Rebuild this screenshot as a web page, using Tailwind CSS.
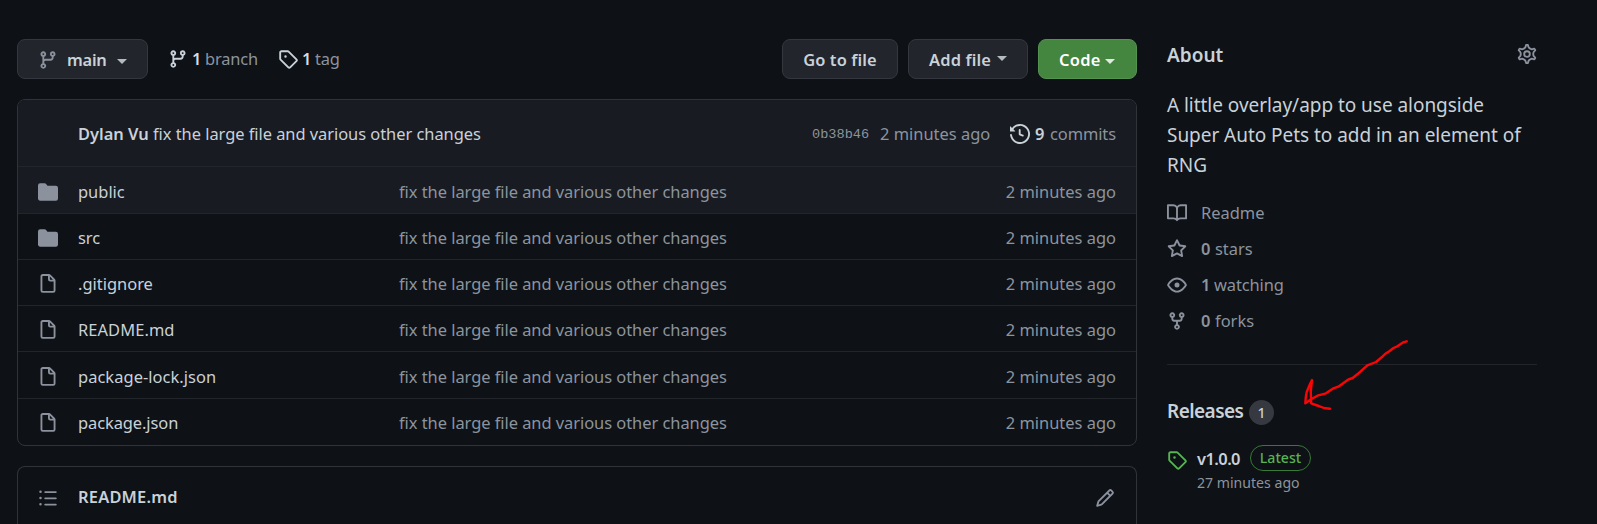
<!DOCTYPE html>
<html lang="en">
<head>
<meta charset="utf-8">
<title>Repository</title>
<script src="https://cdn.jsdelivr.net/npm/@tailwindcss/browser@4"></script>
</head>
<body class="relative h-[524px] w-[1597px] overflow-hidden bg-[#0e1116] font-['Noto_Sans',sans-serif] text-[16.45px] leading-[23px] whitespace-nowrap text-[#c9d1d9]">
<svg class="hidden">
  <symbol id="branch" viewBox="0 0 16 16"><path fill-rule="evenodd" d="M11.75 2.5a.75.75 0 100 1.5.75.75 0 000-1.5zm-2.25.75a2.25 2.25 0 113 2.122V6A2.5 2.5 0 0110 8.5H6a1 1 0 00-1 1v1.128a2.251 2.251 0 11-1.5 0V5.372a2.25 2.25 0 111.5 0v1.836A2.492 2.492 0 016 7h4a1 1 0 001-1v-.628A2.25 2.25 0 019.5 3.25zM4.25 12a.75.75 0 100 1.5.75.75 0 000-1.5zM3.5 3.25a.75.75 0 111.5 0 .75.75 0 01-1.5 0z"/></symbol>
  <symbol id="tag" viewBox="0 0 16 16"><path fill-rule="evenodd" d="M2.5 7.775V2.75a.25.25 0 01.25-.25h5.025a.25.25 0 01.177.073l6.25 6.25a.25.25 0 010 .354l-5.025 5.025a.25.25 0 01-.354 0l-6.25-6.25a.25.25 0 01-.073-.177zm-1.5 0V2.75C1 1.784 1.784 1 2.75 1h5.025c.464 0 .91.184 1.238.513l6.25 6.25a1.75 1.75 0 010 2.474l-5.026 5.026a1.75 1.75 0 01-2.474 0l-6.25-6.25A1.75 1.75 0 011 7.775zM6 5a1 1 0 100 2 1 1 0 000-2z"/></symbol>
  <symbol id="history" viewBox="0 0 16 16"><path fill-rule="evenodd" d="M1.643 3.143L.427 1.927A.25.25 0 000 2.104V5.75c0 .138.112.25.25.25h3.646a.25.25 0 00.177-.427L2.715 4.215a6.5 6.5 0 11-1.18 4.458.75.75 0 10-1.493.154 8.001 8.001 0 101.6-5.684zM7.75 4a.75.75 0 01.75.75v2.992l2.028.812a.75.75 0 01-.557 1.392l-2.5-1A.75.75 0 017 8.25v-3.5A.75.75 0 017.75 4z"/></symbol>
  <symbol id="folder" viewBox="0 0 16 16"><path d="M1.75 1A1.75 1.75 0 000 2.75v10.5C0 14.216.784 15 1.75 15h12.5A1.75 1.75 0 0016 13.25v-8.5A1.75 1.75 0 0014.25 3h-6.5a.25.25 0 01-.2-.1l-.9-1.2c-.33-.44-.85-.7-1.4-.7h-3.5z"/></symbol>
  <symbol id="file" viewBox="0 0 16 16"><path fill-rule="evenodd" d="M3.75 1.5a.25.25 0 00-.25.25v11.5c0 .138.112.25.25.25h8.5a.25.25 0 00.25-.25V6H9.75A1.75 1.75 0 018 4.25V1.5H3.75zm5.75.56v2.19c0 .138.112.25.25.25h2.19L9.5 2.06zM2 1.75C2 .784 2.784 0 3.75 0h5.086c.464 0 .909.184 1.237.513l3.414 3.414c.329.328.513.773.513 1.237v8.086A1.75 1.75 0 0112.25 15h-8.5A1.75 1.75 0 012 13.25V1.75z"/></symbol>
  <symbol id="book" viewBox="0 0 16 16"><path fill-rule="evenodd" d="M0 1.75A.75.75 0 01.75 1h4.253c1.227 0 2.317.59 3 1.501A3.744 3.744 0 0111.006 1h4.245a.75.75 0 01.75.75v10.5a.75.75 0 01-.75.75h-4.507a2.25 2.25 0 00-1.591.659l-.622.621a.75.75 0 01-1.06 0l-.622-.621A2.25 2.25 0 005.258 13H.75a.75.75 0 01-.75-.75V1.75zm8.755 3a2.25 2.25 0 012.25-2.25H14.5v9h-3.757c-.71 0-1.4.201-1.992.572l.004-7.322zm-1.504 7.324l.004-5.073-.002-2.253A2.25 2.25 0 005.003 2.5H1.5v9h3.757a3.75 3.75 0 011.994.574z"/></symbol>
  <symbol id="star" viewBox="0 0 16 16"><path fill-rule="evenodd" d="M8 .25a.75.75 0 01.673.418l1.882 3.815 4.21.612a.75.75 0 01.416 1.279l-3.046 2.97.719 4.192a.75.75 0 01-1.088.791L8 12.347l-3.766 1.98a.75.75 0 01-1.088-.79l.72-4.194L.818 6.374a.75.75 0 01.416-1.28l4.21-.611L7.327.668A.75.75 0 018 .25zm0 2.445L6.615 5.5a.75.75 0 01-.564.41l-3.097.45 2.24 2.184a.75.75 0 01.216.664l-.528 3.084 2.769-1.456a.75.75 0 01.698 0l2.77 1.456-.53-3.084a.75.75 0 01.216-.664l2.24-2.183-3.096-.45a.75.75 0 01-.564-.41L8 2.694v.001z"/></symbol>
  <symbol id="eye" viewBox="0 0 16 16"><path fill-rule="evenodd" d="M1.679 7.932c.412-.621 1.242-1.75 2.366-2.717C5.175 4.242 6.527 3.5 8 3.5c1.473 0 2.824.742 3.955 1.715 1.124.967 1.954 2.096 2.366 2.717a.119.119 0 010 .136c-.412.621-1.242 1.75-2.366 2.717C10.825 11.758 9.473 12.5 8 12.5c-1.473 0-2.824-.742-3.955-1.715C2.92 9.818 2.09 8.69 1.679 8.068a.119.119 0 010-.136zM8 2c-1.981 0-3.67.992-4.933 2.078C1.797 5.169.88 6.423.43 7.1a1.619 1.619 0 000 1.798c.45.678 1.367 1.932 2.637 3.024C4.329 13.008 6.019 14 8 14c1.981 0 3.67-.992 4.933-2.078 1.27-1.091 2.187-2.345 2.637-3.023a1.619 1.619 0 000-1.798c-.45-.678-1.367-1.932-2.637-3.023C11.671 2.992 9.981 2 8 2zm0 8a2 2 0 100-4 2 2 0 000 4z"/></symbol>
  <symbol id="fork" viewBox="0 0 16 16"><path fill-rule="evenodd" d="M5 3.25a.75.75 0 11-1.5 0 .75.75 0 011.5 0zm0 2.122a2.25 2.25 0 10-1.5 0v.878A2.25 2.25 0 005.75 8.5h1.5v2.128a2.251 2.251 0 101.5 0V8.5h1.5a2.25 2.25 0 002.25-2.25v-.878a2.25 2.25 0 10-1.5 0v.878a.75.75 0 01-.75.75h-4.5A.75.75 0 015 6.25v-.878zm3.75 7.378a.75.75 0 11-1.5 0 .75.75 0 011.5 0zm3-8.75a.75.75 0 100-1.5.75.75 0 000 1.5z"/></symbol>
  <symbol id="list" viewBox="0 0 16 16"><path fill-rule="evenodd" d="M2 4a1 1 0 100-2 1 1 0 000 2zm3.75-1.5a.75.75 0 000 1.5h8.5a.75.75 0 000-1.5h-8.5zm0 5a.75.75 0 000 1.5h8.5a.75.75 0 000-1.5h-8.5zm0 5a.75.75 0 000 1.5h8.5a.75.75 0 000-1.5h-8.5zM3 8a1 1 0 11-2 0 1 1 0 012 0zm-1 6a1 1 0 100-2 1 1 0 000 2z"/></symbol>
  <symbol id="pencil" viewBox="0 0 16 16"><path fill-rule="evenodd" d="M11.013 1.427a1.75 1.75 0 012.474 0l1.086 1.086a1.75 1.75 0 010 2.474l-8.61 8.61c-.21.21-.47.364-.756.445l-3.251.93a.75.75 0 01-.927-.928l.929-3.25a1.75 1.75 0 01.445-.758l8.61-8.61zm1.414 1.06a.25.25 0 00-.354 0L10.811 3.75l1.439 1.44 1.263-1.263a.25.25 0 000-.354l-1.086-1.086zM11.189 6.25L9.75 4.81l-6.286 6.287a.25.25 0 00-.064.108l-.558 1.953 1.953-.558a.249.249 0 00.108-.064l6.286-6.286z"/></symbol>
  <symbol id="gear" viewBox="0 0 16 16"><g fill="none" stroke="currentColor"><circle cx="8" cy="8" r="2.25" stroke-width="1.5"/><path transform="translate(8 8) scale(1.12) translate(-8 -8)" stroke-width="1.34" d="M7.429 1.525a6.593 6.593 0 011.142 0c.036.003.108.036.137.146l.289 1.105c.147.56.55.967.997 1.189.174.086.341.183.501.29.417.278.97.423 1.53.27l1.102-.303c.11-.03.175.016.195.046.219.31.41.641.573.989.014.031.022.11-.059.19l-.815.806c-.411.406-.562.957-.53 1.456a4.588 4.588 0 010 .582c-.032.499.119 1.05.53 1.456l.815.806c.08.08.073.159.059.19a6.494 6.494 0 01-.573.99c-.02.029-.086.074-.195.045l-1.103-.303c-.559-.153-1.112-.008-1.529.27-.16.107-.327.204-.5.29-.449.222-.851.628-.998 1.189l-.289 1.105c-.029.11-.101.143-.137.146a6.613 6.613 0 01-1.142 0c-.036-.003-.108-.037-.137-.146l-.289-1.105c-.147-.56-.55-.967-.997-1.189a4.502 4.502 0 01-.501-.29c-.417-.278-.97-.423-1.53-.27l-1.102.303c-.11.03-.175-.016-.195-.046a6.492 6.492 0 01-.573-.989c-.014-.031-.022-.11.059-.19l.815-.806c.411-.406.562-.957.53-1.456a4.587 4.587 0 010-.582c.032-.499-.119-1.05-.53-1.456l-.815-.806c-.08-.08-.073-.159-.059-.19a6.44 6.44 0 01.573-.99c.02-.029.086-.075.195-.045l1.103.303c.559.153 1.112.008 1.529-.27.16-.107.327-.204.5-.29.449-.222.851-.628.998-1.189l.289-1.105c.029-.11.101-.143.137-.146z"/></g></symbol>
</svg>

<div class="flex items-start">
  <main class="ml-[17px] w-[1120px] shrink-0 pt-[39px]">
    <!-- Toolbar -->
    <div class="flex h-10 items-start">
      <button class="flex h-10 w-[131px] items-start rounded-lg border border-[#34373d] bg-[#22252c] pt-2 pl-5 font-semibold">
        <svg class="mt-[2px] size-5 shrink-0 fill-[#8b929d]"><use href="#branch"/></svg>
        <span class="ml-[9px] w-[42px] text-left tracking-[-0.25px]">main</span>
        <span class="mt-[11px] ml-2 border-x-5 border-t-5 border-x-transparent border-t-[#b3bac2]"></span>
      </button>
      <div class="ml-5 flex pt-2">
        <svg class="mt-[2px] size-5 fill-[#c9d1d9]"><use href="#branch"/></svg>
        <span class="ml-1 w-[13px] font-semibold text-[#d5dce3]">1</span>
        <span class="w-[73px] tracking-[-0.15px] text-[#8b949e]">branch</span>
        <svg class="mt-[2px] size-5 fill-[#c9d1d9]"><use href="#tag"/></svg>
        <span class="ml-1 w-[13px] font-semibold text-[#d5dce3]">1</span>
        <span class="tracking-[-0.25px] text-[#8b949e]">tag</span>
      </div>
      <div class="ml-auto flex gap-[10px] font-semibold">
        <button class="flex h-10 w-[116px] justify-center rounded-lg border border-[#34373d] bg-[#22252c] pt-2 tracking-[0.12px]">Go to file</button>
        <button class="flex h-10 w-[120px] items-start rounded-lg border border-[#34373d] bg-[#22252c] pt-2 pl-5">
          <span class="w-[68px] text-left tracking-[0.15px]">Add file</span>
          <span class="mt-2 border-x-5 border-t-5 border-x-transparent border-t-[#b3bac2]"></span>
        </button>
        <button class="flex h-10 w-[99px] items-start rounded-lg border border-[#53924f] bg-[#448540] pt-2 pl-5 text-white">
          <span class="w-[46px] text-left tracking-[0.25px]">Code</span>
          <span class="mt-[11px] border-x-5 border-t-5 border-x-transparent border-t-[#e0ebdf]"></span>
        </button>
      </div>
    </div>

    <!-- File list -->
    <div class="mt-5 h-[347px] overflow-hidden rounded-lg border border-[#303338]">
      <div class="flex h-[67px] items-start border-b border-[#22252a] bg-[#181b22] pt-[22px] pr-5 pl-[60px]">
        <span class="w-[75px] font-semibold">Dylan Vu</span>
        <span class="tracking-[-0.04px]">fix the large file and various other changes</span>
        <span class="ml-auto w-[68px] font-['Liberation_Mono',monospace] text-[13.6px] leading-[25px] text-[#8b949e]">0b38b46</span>
        <span class="w-[130px] text-[#8b949e]">2 minutes ago</span>
        <svg class="mt-[2px] size-5 fill-[#c9d1d9]"><use href="#history"/></svg>
        <span class="ml-[5px] w-[15px] font-semibold">9</span>
        <span class="w-[66px] tracking-[-0.1px] text-[#8b949e]">commits</span>
      </div>
      <div class="flex h-[47px] items-start border-b border-[#22252a] bg-[#181b22] pt-[13px] pr-5 pl-5">
        <svg class="mt-[2px] size-5 fill-[#8b929d]"><use href="#folder"/></svg>
        <span class="ml-5 w-[321px]">public</span>
        <span class="tracking-[-0.04px] text-[#8b949e]">fix the large file and various other changes</span>
        <span class="ml-auto text-[#8b949e]">2 minutes ago</span>
      </div>
      <div class="flex h-[46px] items-start border-b border-[#22252a] pt-3 pr-5 pl-5">
        <svg class="mt-[2px] size-5 fill-[#8b929d]"><use href="#folder"/></svg>
        <span class="ml-5 w-[321px]">src</span>
        <span class="tracking-[-0.04px] text-[#8b949e]">fix the large file and various other changes</span>
        <span class="ml-auto text-[#8b949e]">2 minutes ago</span>
      </div>
      <div class="flex h-[46px] items-start border-b border-[#22252a] pt-3 pr-5 pl-5">
        <svg class="mt-[2px] size-5 fill-[#8b929d]"><use href="#file"/></svg>
        <span class="ml-5 w-[321px]">.gitignore</span>
        <span class="tracking-[-0.04px] text-[#8b949e]">fix the large file and various other changes</span>
        <span class="ml-auto text-[#8b949e]">2 minutes ago</span>
      </div>
      <div class="flex h-[46px] items-start border-b border-[#22252a] pt-3 pr-5 pl-5">
        <svg class="mt-[2px] size-5 fill-[#8b929d]"><use href="#file"/></svg>
        <span class="ml-5 w-[321px] tracking-[0.08px]">README.md</span>
        <span class="tracking-[-0.04px] text-[#8b949e]">fix the large file and various other changes</span>
        <span class="ml-auto text-[#8b949e]">2 minutes ago</span>
      </div>
      <div class="flex h-[47px] items-start border-b border-[#22252a] pt-[13px] pr-5 pl-5">
        <svg class="mt-[2px] size-5 fill-[#8b929d]"><use href="#file"/></svg>
        <span class="ml-5 w-[321px] tracking-[0.05px]">package-lock.json</span>
        <span class="tracking-[-0.04px] text-[#8b949e]">fix the large file and various other changes</span>
        <span class="ml-auto text-[#8b949e]">2 minutes ago</span>
      </div>
      <div class="flex h-[46px] items-start pt-3 pr-5 pl-5">
        <svg class="mt-[2px] size-5 fill-[#8b929d]"><use href="#file"/></svg>
        <span class="ml-5 w-[321px] tracking-[-0.08px]">package.json</span>
        <span class="tracking-[-0.04px] text-[#8b949e]">fix the large file and various other changes</span>
        <span class="ml-auto text-[#8b949e]">2 minutes ago</span>
      </div>
    </div>

    <!-- Readme -->
    <div class="mt-5 flex h-[58px] items-start rounded-t-lg border border-b-0 border-[#303338] pt-[18px] pr-[21px] pl-5">
      <svg class="mt-[3px] size-5 fill-[#8b929d]"><use href="#list"/></svg>
      <span class="ml-5 font-semibold tracking-[0.2px]">README.md</span>
      <svg class="mt-[3px] ml-auto size-5 fill-[#8b929d]"><use href="#pencil"/></svg>
    </div>
  </main>

  <aside class="ml-[30px] w-[370px] shrink-0 pt-[42px]">
    <div class="flex h-[48px] items-start">
      <h2 class="text-[19px] leading-[26px] font-semibold">About</h2>
      <svg class="mt-[2px] ml-auto size-5 text-[#8b929d]"><use href="#gear"/></svg>
    </div>
    <p class="text-[19px] leading-[30px] tracking-[-0.04px]">A little overlay/app to use alongside<br>Super Auto Pets to add in an element of<br>RNG</p>
    <ul class="mt-[21px] flex flex-col gap-[13px] text-[#8b949e]">
      <li class="flex h-[23px]"><svg class="mt-[2px] mr-[14px] size-5 fill-[#8b929d]"><use href="#book"/></svg><span>Readme</span></li>
      <li class="flex h-[23px]"><svg class="mt-[2px] mr-[14px] size-5 fill-[#8b929d]"><use href="#star"/></svg><span class="w-[14px] font-semibold">0</span><span>stars</span></li>
      <li class="flex h-[23px]"><svg class="mt-[2px] mr-[14px] size-5 fill-[#8b929d]"><use href="#eye"/></svg><span class="w-[13px] font-semibold">1</span><span class="tracking-[-0.1px]">watching</span></li>
      <li class="flex h-[23px]"><svg class="mt-[2px] mr-[14px] size-5 fill-[#8b929d]"><use href="#fork"/></svg><span class="w-[14px] font-semibold">0</span><span>forks</span></li>
    </ul>
    <div class="mt-[32px] border-t border-[#22252a]"></div>
    <div class="mt-[33px] flex items-start">
      <h2 class="w-[82px] text-[19px] leading-[26px] font-semibold tracking-[-0.55px]">Releases</h2>
      <span class="mt-[2px] h-[25px] w-[25px] rounded-full bg-[#363a40] text-center text-[14.1px] leading-[25px] font-medium">1</span>
    </div>
    <div class="mt-5 flex items-start">
      <svg class="mt-[5px] size-5 fill-[#57b353]"><use href="#tag"/></svg>
      <div class="ml-[10px]">
        <div class="flex items-start">
          <span class="mt-[2px] w-[53px] font-semibold tracking-[-0.55px]">v1.0.0</span>
          <span class="flex h-[26px] w-[61px] justify-center rounded-full border border-[#377a36] text-[14.1px] leading-[23px] font-medium text-[#57b353]">Latest</span>
        </div>
        <div class="mt-[2px] text-[14.1px] leading-[19px] text-[#8b949e]">27 minutes ago</div>
      </div>
    </div>
  </aside>
</div>

<!-- Hand-drawn arrow over the sidebar -->
<svg class="absolute top-[330px] left-[1290px]" width="130" height="90" viewBox="1290 330 130 90" fill="none" stroke="#fa0505" stroke-width="2.4" stroke-linecap="round" stroke-linejoin="round"><path d="M1406.7 341.3L1403 342.4 1397.3 346.3 1393.5 348 1389.3 351.3 1385 354 1381.7 357.3 1376 362 1367.3 365.3 1357.3 374.3 1352.7 378 1348 379.7 1338.3 386.7 1332.7 388.7 1326 393.3 1318.3 395.3 1310.7 399.5 1305.3 403.3 1305.8 397 1306.7 392 1310 384 1312 380 1310.8 391.7 1311.2 403.3 1317.3 405.5 1324 408 1330 408.7"/></svg>
</body>
</html>
